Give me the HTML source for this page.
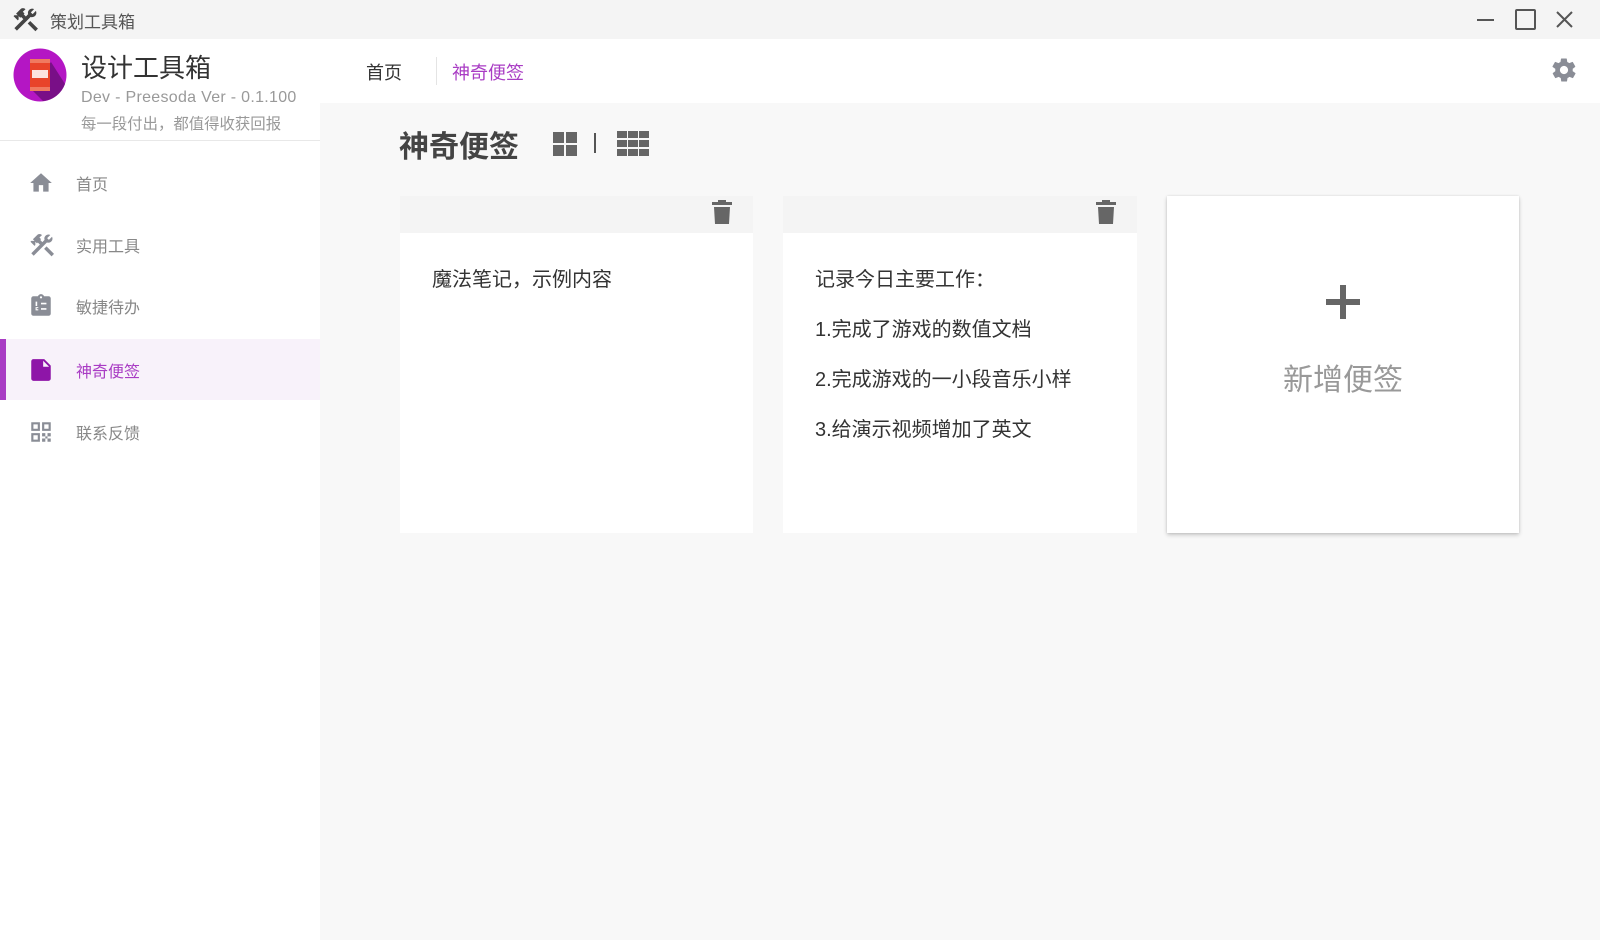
<!DOCTYPE html>
<html><head><meta charset="utf-8"><style>
*{box-sizing:border-box;margin:0;padding:0}
body{width:1600px;height:940px;overflow:hidden;background:#f8f8f8;font-family:"Liberation Sans","Noto Sans CJK SC",sans-serif;position:relative;color:#333}
.abs{position:absolute}
#tb{left:0;top:0;width:1600px;height:39px;background:#f4f4f4}
#side{left:0;top:39px;width:320px;height:901px;background:#fff}
#top{left:320px;top:39px;width:1280px;height:64px;background:#fff}
.mi{position:absolute;left:0;width:320px;height:61px;display:flex;align-items:center;font-size:16px;color:#888}
.mi svg{position:absolute;left:28px}
.mi span{position:absolute;left:76px}
.card{position:absolute;top:196px;height:337px;background:#fff}
.card .hd{height:37px;background:#f4f4f4;position:relative}
.card .hd svg{position:absolute;right:20px;top:3px}
.card p{position:absolute;left:32px;font-size:20px;color:#333;line-height:24px}
</style></head><body>
<div id="tb" class="abs">
<svg class="abs" style="left:11px;top:5px" width="29" height="29" viewBox="0 0 24 24"><path fill="#444" d="M13.8 15.3l2.1-2.1 6.4 6.4-2.1 2.1zM17.5 10c1.9 0 3.5-1.6 3.5-3.5 0-.6-.2-1.1-.4-1.6l-2.7 2.7-1.5-1.5 2.7-2.7c-.5-.2-1-.4-1.6-.4-1.9 0-3.5 1.6-3.5 3.5 0 .4.1.8.2 1.1l-1.9 1.9-1.8-1.8.7-.7-1.4-1.4L12 3.5c-1.2-1.2-3.1-1.2-4.2 0L4.2 7.1l1.4 1.4H2.8l-.7.7 3.5 3.5.7-.7V9.2l1.4 1.4.7-.7 1.8 1.8-7.4 7.4 2.1 2.1 11.3-11.3c.4.1.7.2 1.1.2z"/></svg>
<div class="abs" style="left:50px;top:8px;font-size:17px;color:#555">策划工具箱</div>
<div class="abs" style="left:1477px;top:19px;width:17px;height:2px;background:#555"></div>
<div class="abs" style="left:1515px;top:9px;width:21px;height:21px;border:2px solid #555;border-radius:2px"></div>
<svg class="abs" style="left:1555px;top:10px" width="19" height="19" viewBox="0 0 19 19"><path d="M2 2L17 17M17 2L2 17" stroke="#555" stroke-width="2"/></svg>
</div>
<div id="side" class="abs">
<svg class="abs" style="left:13px;top:9px" width="54" height="54" viewBox="0 0 54 54"><circle cx="27" cy="27" r="26.5" fill="#b416c4"/><path d="M38 14 L52 36 A26 26 0 0 1 30 53 L17 40Z" fill="#6a0e78" opacity=".8"/><rect x="17" y="11" width="20" height="32" rx="3" fill="#e8442a"/><rect x="17" y="11" width="20" height="4" fill="#f07a60"/><rect x="17" y="39" width="20" height="4" fill="#f07a60"/><rect x="19" y="22" width="16" height="8" fill="#fff" opacity=".85"/></svg>
<div class="abs" style="left:81px;top:9px;font-size:26px;color:#333">设计工具箱</div>
<div class="abs" style="left:81px;top:50px;font-size:16px;color:#999;letter-spacing:.3px">Dev - Preesoda Ver - 0.1.100</div>
<div class="abs" style="left:81px;top:73px;font-size:15.4px;color:#999">每一段付出，都值得收获回报</div>
<div class="abs" style="left:0;top:101px;width:320px;height:1px;background:#e8e8e8"></div>
<div class="mi" style="top:113px"><svg width="26" height="26" viewBox="0 0 24 24"><path fill="#8a8d96" d="M10 20v-6h4v6h5v-8h3L12 3 2 12h3v8z"/></svg><span>首页</span></div>
<div class="mi" style="top:175px"><svg width="28" height="28" viewBox="0 0 24 24"><path fill="#8a8d96" d="M13.8 15.3l2.1-2.1 6.4 6.4-2.1 2.1zM17.5 10c1.9 0 3.5-1.6 3.5-3.5 0-.6-.2-1.1-.4-1.6l-2.7 2.7-1.5-1.5 2.7-2.7c-.5-.2-1-.4-1.6-.4-1.9 0-3.5 1.6-3.5 3.5 0 .4.1.8.2 1.1l-1.9 1.9-1.8-1.8.7-.7-1.4-1.4L12 3.5c-1.2-1.2-3.1-1.2-4.2 0L4.2 7.1l1.4 1.4H2.8l-.7.7 3.5 3.5.7-.7V9.2l1.4 1.4.7-.7 1.8 1.8-7.4 7.4 2.1 2.1 11.3-11.3c.4.1.7.2 1.1.2z"/></svg><span>实用工具</span></div>
<div class="mi" style="top:236px"><svg width="26" height="26" viewBox="0 0 24 24"><path fill="#8a8d96" d="M19 3h-4.2C14.4 1.8 13.3 1 12 1s-2.4.8-2.8 2H5c-1.1 0-2 .9-2 2v14c0 1.1.9 2 2 2h14c1.1 0 2-.9 2-2V5c0-1.1-.9-2-2-2zm-7 0c.6 0 1 .4 1 1s-.4 1-1 1-1-.4-1-1 .4-1 1-1z"/><path fill="#fff" d="M12 9h5v1.5h-5zM12 14h5v1.5h-5zM7 8h1.5v4H7zM7 13h2.5v1H8v1h1.5v1H7z"/></svg><span>敏捷待办</span></div>
<div class="mi" style="top:300px;background:#f8f2fa;color:#a93cc4"><div class="abs" style="left:0;top:0;width:6px;height:61px;background:#a93cc4"></div><svg width="26" height="26" viewBox="0 0 24 24"><path fill="#8e15a8" d="M6 2h9l6 6v12c0 1.1-.9 2-2 2H5c-1.1 0-2-.9-2-2V4c0-1.1.9-2 2-2zm8 1.5V9h5.5z"/></svg><span>神奇便签</span></div>
<div class="mi" style="top:362px"><svg width="26" height="26" viewBox="0 0 24 24"><path fill="#8a8d96" d="M3 3h8v8H3zm2 2v4h4V5zM13 3h8v8h-8zm2 2v4h4V5zM3 13h8v8H3zm2 2v4h4v-4zM13 13h3v3h-3zM18 13h3v3h-3zM16 16h2v2h-2zM13 18h3v3h-3zM18 18h3v3h-3z"/></svg><span>联系反馈</span></div>
</div>
<div id="top" class="abs">
<div class="abs" style="left:46px;top:20px;font-size:18px;color:#333">首页</div>
<div class="abs" style="left:116px;top:18px;width:1px;height:28px;background:#e4e4e4"></div>
<div class="abs" style="left:132px;top:20px;font-size:18px;color:#a93cc4">神奇便签</div>
<svg class="abs" style="left:1230px;top:17px" width="28" height="28" viewBox="0 0 24 24"><path fill="#8a8d96" d="M19.4 13c0-.3.1-.6.1-1s0-.7-.1-1l2.1-1.6c.2-.2.2-.4.1-.6l-2-3.5c-.1-.2-.4-.3-.6-.2l-2.5 1c-.5-.4-1.1-.7-1.7-1l-.4-2.6c0-.2-.2-.4-.5-.4h-4c-.2 0-.5.2-.5.4l-.4 2.6c-.6.3-1.2.6-1.7 1l-2.5-1c-.2-.1-.5 0-.6.2l-2 3.5c-.1.2-.1.5.1.6L4.6 11c0 .3-.1.6-.1 1s0 .7.1 1l-2.1 1.6c-.2.2-.2.4-.1.6l2 3.5c.1.2.4.3.6.2l2.5-1c.5.4 1.1.7 1.7 1l.4 2.6c0 .2.2.4.5.4h4c.2 0 .5-.2.5-.4l.4-2.6c.6-.3 1.2-.6 1.7-1l2.5 1c.2.1.5 0 .6-.2l2-3.5c.1-.2.1-.5-.1-.6zM12 15.5c-1.9 0-3.5-1.6-3.5-3.5s1.6-3.5 3.5-3.5 3.5 1.6 3.5 3.5-1.6 3.5-3.5 3.5z"/></svg>
</div>
<div class="abs" style="left:399px;top:122px;font-size:30px;font-weight:bold;color:#444">神奇便签</div>
<svg class="abs" style="left:553px;top:132px" width="25" height="25" viewBox="0 0 25 25"><path fill="#666" d="M0 0h11v11H0zM13 0h11v11H13zM0 13h11v11H0zM13 13h11v11H13z"/></svg>
<div class="abs" style="left:594px;top:133px;width:2px;height:20px;background:#555"></div>
<svg class="abs" style="left:617px;top:131px" width="32" height="25" viewBox="0 0 32 25"><path fill="#666" d="M0 0h10v7H0zM11 0h10v7H11zM22 0h10v7H22zM0 9h10v7H0zM11 9h10v7H11zM22 9h10v7H22zM0 18h10v7H0zM11 18h10v7H11zM22 18h10v7H22z"/></svg>
<div class="card" style="left:400px;width:353px"><div class="hd"><svg width="22" height="26" viewBox="0 0 22 26"><path fill="#666" d="M7 1h8v2h6v3H1V3h6zM3 8h16l-1 17H4z"/></svg></div><p style="top:72px">魔法笔记，示例内容</p></div>
<div class="card" style="left:783px;width:354px"><div class="hd"><svg width="22" height="26" viewBox="0 0 22 26"><path fill="#666" d="M7 1h8v2h6v3H1V3h6zM3 8h16l-1 17H4z"/></svg></div>
<p style="top:72px">记录今日主要工作：</p><p style="top:122px">1.完成了游戏的数值文档</p><p style="top:172px">2.完成游戏的一小段音乐小样</p><p style="top:222px">3.给演示视频增加了英文</p></div>
<div class="card" style="left:1167px;width:352px;box-shadow:0 2px 4px rgba(0,0,0,.2),0 0 2px rgba(0,0,0,.1)">
<div class="abs" style="left:159px;top:103px;width:34px;height:6px;background:#666"></div>
<div class="abs" style="left:173px;top:89px;width:6px;height:34px;background:#666"></div>
<div class="abs" style="left:0;width:352px;top:159px;text-align:center;font-size:30px;color:#999">新增便签</div>
</div>
</body></html>
